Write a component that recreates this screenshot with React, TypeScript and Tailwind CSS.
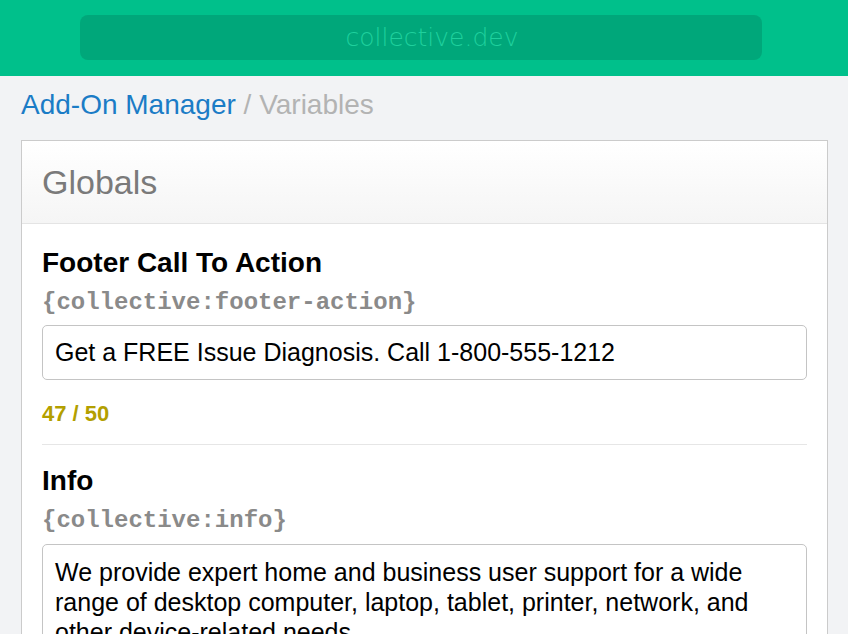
import React from 'react';

const sans = { fontFamily: '"Liberation Sans", Arial, sans-serif' };

const Field: React.FC<{ label: string; tag: string; children: React.ReactNode }> = ({ label, tag, children }) => (
  <div>
    <h3 className="text-[28px] font-bold text-black leading-[32px]">{label}</h3>
    <div className="mt-[10px] text-[24px] font-bold text-[#8a8a8a] leading-[28px] font-['Liberation_Mono',monospace]">{tag}</div>
    {children}
  </div>
);

export default function App() {
  return (
    <div className="min-h-[634px] bg-[#f2f3f5] overflow-hidden" style={sans}>
      {/* Header */}
      <div className="h-[76px] bg-[#00c08b] pt-[15px]">
        <div className="ml-[80px] w-[682px] h-[45px] rounded-[8px] bg-[#00a77a] flex items-center justify-center">
          <span className="text-[25px] font-extralight text-[#1fd09d] font-['DejaVu_Sans',sans-serif] pl-[22px]">collective.dev</span>
        </div>
      </div>

      {/* Breadcrumb */}
      <div className="px-[21px] pt-[13px] pb-[19px] text-[28px] leading-[32px]">
        <span className="text-[#1b7cc6]">Add-On Manager</span>
        <span className="text-[#b3b3b3]"> / Variables</span>
      </div>

      {/* Card */}
      <div className="mx-[21px] w-[807px] border-[1.5px] border-[#cbcbcb] bg-white">
        <div className="h-[83px] flex items-center px-[20px] bg-gradient-to-b from-white to-[#f5f5f5] border-b-[1.5px] border-[#e4e4e4]">
          <h2 className="text-[34px] text-[#7a7a7a] leading-[40px]">Globals</h2>
        </div>

        <div className="px-[20px] pt-[23px]">
          <Field label="Footer Call To Action" tag="{collective:footer-action}">
            <div className="mt-[8px] h-[55px] rounded-[5px] border-[1.5px] border-[#c4c4c4] flex items-center px-[12px] text-[25px] text-black">
              Get a FREE Issue Diagnosis. Call 1-800-555-1212
            </div>
            <div className="mt-[21px] text-[22px] font-bold text-[#b39f00] leading-[26px]">47 / 50</div>
          </Field>

          <div className="mt-[17px] border-t-[1.5px] border-[#e6e6e6]" />

          <div className="pt-[20px]">
            <Field label="Info" tag="{collective:info}">
              <div className="mt-[9px] rounded-[5px] border-[1.5px] border-[#c4c4c4] px-[12px] pt-[12px] pb-[12px] text-[25px] leading-[30px] text-black">
                We provide expert home and business user support for a wide range of desktop computer, laptop, tablet, printer, network, and other device-related needs.
              </div>
            </Field>
          </div>
        </div>
      </div>
    </div>
  );
}
